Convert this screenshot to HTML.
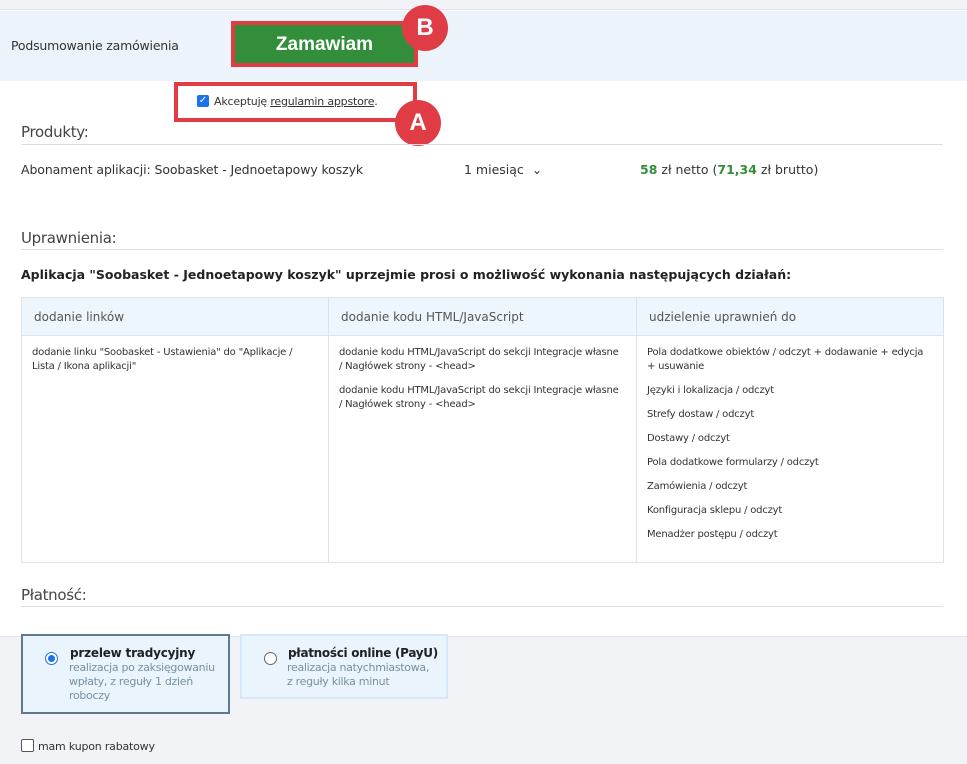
<!DOCTYPE html>
<html><head><meta charset="utf-8"><style>
*{margin:0;padding:0;box-sizing:border-box}
body{width:967px;height:764px;position:relative;background:#fff;font-family:"DejaVu Sans",Verdana,sans-serif;color:#333;overflow:hidden}
.a{position:absolute;white-space:nowrap}
.hr{position:absolute;left:21px;width:922px;height:1px;background:#ddd}
.sec{font-size:15px;color:#444;letter-spacing:-0.3px}
td,th{border:1px solid #dde3ea;vertical-align:top;text-align:left}
th{background:#edf5fd;font-weight:normal;font-size:12px;color:#555;height:38px;vertical-align:middle;padding-left:12px}
td{font-size:10px;line-height:14px;padding:10px 16px 10px 10px;color:#333;letter-spacing:-0.2px}
td p{margin-bottom:10px}
.badge{position:absolute;width:46px;height:46px;border-radius:50%;background:#e03c46;color:#fff;font:bold 24px "Liberation Sans",sans-serif;text-align:center;line-height:46px}
</style></head><body>
<div class="a" style="left:0;top:0;width:967px;height:10px;background:#f2f3f6;border-bottom:1px solid #e2e4e8"></div>
<div class="a" style="left:0;top:11px;width:967px;height:70px;background:#edf3fa"></div>
<div class="a" style="left:11px;top:38px;font-size:12.5px;color:#333;letter-spacing:-0.2px">Podsumowanie zamówienia</div>
<div class="a" style="left:231px;top:21px;width:187px;height:46px;border:4px solid #e03c46;background:#338e3b"></div>
<div class="a" style="left:235px;top:34px;width:179px;text-align:center;color:#fff;font:bold 19px 'Liberation Sans',sans-serif">Zamawiam</div>
<div class="badge" style="left:402px;top:5px">B</div>
<div class="a" style="left:174px;top:82px;width:243px;height:40px;border:4px solid #e03c46;background:#fff"></div>
<div class="a" style="left:197px;top:95px;width:12px;height:12px;background:#1a73e8;border-radius:2px;color:#fff;font-size:10px;line-height:12px;text-align:center">✓</div>
<div class="a" style="left:214px;top:95px;font-size:11px;color:#333;letter-spacing:-0.2px">Akceptuję <u>regulamin appstore</u>.</div>
<div class="badge" style="left:395px;top:100px">A</div>
<div class="a sec" style="left:21px;top:123px">Produkty:</div>
<div class="hr" style="top:144px"></div>
<div class="a" style="left:21px;top:162px;font-size:12.5px;letter-spacing:-0.1px">Abonament aplikacji: Soobasket - Jednoetapowy koszyk</div>
<div class="a" style="left:464px;top:162px;font-size:12.5px">1 miesiąc &nbsp;⌄</div>
<div class="a" style="left:640px;top:162px;font-size:12.5px"><b style="color:#338e3b">58</b> zł netto (<b style="color:#338e3b">71,34</b> zł brutto)</div>
<div class="a sec" style="left:21px;top:229px">Uprawnienia:</div>
<div class="hr" style="top:249px"></div>
<div class="a" style="left:21px;top:267px;font-size:12.5px;font-weight:bold;color:#222">Aplikacja "Soobasket - Jednoetapowy koszyk" uprzejmie prosi o możliwość wykonania następujących działań:</div>
<table class="a" style="left:21px;top:297px;width:923px;height:264px;border-collapse:collapse;white-space:normal">
<tr><th style="width:307px">dodanie linków</th><th style="width:308px">dodanie kodu HTML/JavaScript</th><th>udzielenie uprawnień do</th></tr>
<tr><td>dodanie linku "Soobasket - Ustawienia" do "Aplikacje /<br>Lista / Ikona aplikacji"</td>
<td><p>dodanie kodu HTML/JavaScript do sekcji Integracje własne<br>/ Nagłówek strony - &lt;head&gt;</p><p>dodanie kodu HTML/JavaScript do sekcji Integracje własne<br>/ Nagłówek strony - &lt;head&gt;</p></td>
<td><p>Pola dodatkowe obiektów / odczyt + dodawanie + edycja<br>+ usuwanie</p><p>Języki i lokalizacja / odczyt</p><p>Strefy dostaw / odczyt</p><p>Dostawy / odczyt</p><p>Pola dodatkowe formularzy / odczyt</p><p>Zamówienia / odczyt</p><p>Konfiguracja sklepu / odczyt</p><p>Menadżer postępu / odczyt</p></td></tr>
</table>
<div class="a sec" style="left:21px;top:586px">Płatność:</div>
<div class="hr" style="top:606px"></div>
<div class="a" style="left:0;top:636px;width:967px;height:128px;background:#f2f3f7;border-top:1px solid #e2e4e8"></div>
<div class="a" style="left:21px;top:634px;width:209px;height:80px;border:2px solid #5f7a8e;background:#eaf4fd"></div>
<div class="a" style="left:45px;top:652px;width:13px;height:13px;border-radius:50%;border:1px solid #1a73e8;background:#fff"><div style="margin:2px;width:7px;height:7px;border-radius:50%;background:#1a73e8"></div></div>
<div class="a" style="left:70px;top:646px;font-size:12px;font-weight:bold;color:#222;letter-spacing:-0.2px">przelew tradycyjny</div>
<div class="a" style="left:69px;top:661px;font-size:11px;line-height:14px;color:#7890a0;white-space:normal;width:160px;letter-spacing:-0.3px">realizacja po zaksięgowaniu wpłaty, z reguły 1 dzień roboczy</div>
<div class="a" style="left:240px;top:634px;width:208px;height:65px;border:2px solid #d6e8f8;background:#eaf4fd"></div>
<div class="a" style="left:264px;top:652px;width:13px;height:13px;border-radius:50%;border:1px solid #666;background:#fff"></div>
<div class="a" style="left:288px;top:646px;font-size:12px;font-weight:bold;color:#222;letter-spacing:-0.3px">płatności online (PayU)</div>
<div class="a" style="left:287px;top:661px;font-size:11px;line-height:14px;color:#7890a0;letter-spacing:-0.3px">realizacja natychmiastowa,<br>z reguły kilka minut</div>
<div class="a" style="left:21px;top:739px;width:13px;height:13px;border:1px solid #555;border-radius:2px;background:#fff"></div>
<div class="a" style="left:38px;top:740px;font-size:11px;color:#333;letter-spacing:-0.2px">mam kupon rabatowy</div>
</body></html>
